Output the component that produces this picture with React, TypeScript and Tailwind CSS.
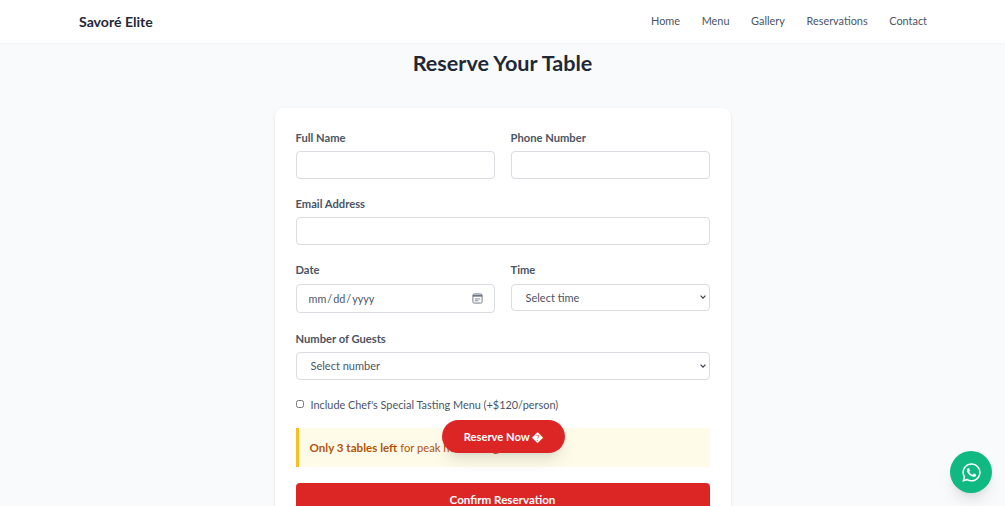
import { FaWhatsapp } from 'react-icons/fa';

const navLinks = ['Home', 'Menu', 'Gallery', 'Reservations', 'Contact'];

const labelClass = 'block mb-[4.4px] text-[11.2px] leading-[18px] font-bold text-[#4b5563]';
const fieldClass =
  'block w-full h-[27.6px] bg-white border border-[#d9dce1] rounded-[4px] text-[#4b5563]';

function Select({ label }: { label: string }) {
  return (
    <div className="relative">
      <select className={`${fieldClass} appearance-none px-[14px] pt-[1px] text-[11px]`}>
        <option>{label}</option>
      </select>
      <svg
        viewBox="0 0 6 4"
        className="absolute right-[3.5px] top-[11.5px] w-[6px] h-[4px] text-[#374151]"
        fill="none"
        stroke="currentColor"
        strokeWidth="1.2"
      >
        <path d="M.6.7 3 3.1 5.4.7" />
      </svg>
    </div>
  );
}

function App() {
  return (
    <div className="relative h-[506px] overflow-hidden bg-[#f9fafb] font-['Lato',sans-serif]">
      {/* Nav */}
      <nav className="h-[44px] bg-white border-b border-[#f3f4f6] flex items-center justify-between pl-[79px] pr-[78px]">
        <span className="text-[14.1px] font-bold text-[#1f2937]">Savoré Elite</span>
        <div className="flex items-center gap-[21.6px]">
          {navLinks.map((link) => (
            <a key={link} className="text-[10.9px] text-[#4b5563]">
              {link}
            </a>
          ))}
        </div>
      </nav>

      {/* Content */}
      <main className="flex flex-col items-center">
        <h2 className="mt-[3px] mb-[28px] text-[21.6px] leading-[33px] font-bold text-[#1f2937]">Reserve Your Table</h2>

        <form className="w-[456px] bg-white rounded-[8px] shadow-sm px-[21px] pt-[20.6px]">
          <div className="grid grid-cols-2 gap-x-[16px]">
            <div>
              <label className={labelClass}>Full Name</label>
              <input type="text" className={`${fieldClass} px-[10px] text-[11px]`} />
            </div>
            <div>
              <label className={labelClass}>Phone Number</label>
              <input type="tel" className={`${fieldClass} px-[10px] text-[11px]`} />
            </div>
          </div>

          <div className="mt-[16.4px]">
            <label className={labelClass}>Email Address</label>
            <input type="email" className={`${fieldClass} px-[10px] text-[11px]`} />
          </div>

          <div className="mt-[16.4px] grid grid-cols-2 gap-x-[16px]">
            <div>
              <label className={labelClass}>Date</label>
              <div className="relative">
                <input
                  type="date"
                  className={`${fieldClass} h-[29.6px] pl-[11px] pr-[10px] pt-[1px] text-[10.8px] [&::-webkit-calendar-picker-indicator]:opacity-0`}
                />
                <svg
                  viewBox="0 0 12 12"
                  className="absolute right-[12px] top-[9px] w-[11px] h-[11px] text-[#6b7280]"
                  fill="none"
                  stroke="currentColor"
                >
                  <rect x="1" y="1" width="10" height="10" rx="1.5" strokeWidth="1" />
                  <path d="M1 3h10" strokeWidth="2" />
                  <path d="M3 6.5h6M3 8.5h4" strokeWidth="0.9" />
                </svg>
              </div>
            </div>
            <div>
              <label className={labelClass}>Time</label>
              <Select label="Select time" />
            </div>
          </div>

          <div className="mt-[16.4px]">
            <label className={labelClass}>Number of Guests</label>
            <Select label="Select number" />
          </div>

          <label className="mt-[16px] flex items-center gap-[7px] text-[10.9px] leading-[18px] text-[#4b5563]">
            <input type="checkbox" className="w-[8px] h-[8px] mb-[2px]" />
            Include Chef's Special Tasting Menu (+$120/person)
          </label>

          <div className="mt-[14.6px] h-[38.4px] flex items-center pl-[11px] bg-[#fefce8] border-l-[3px] border-[#fbbf24] text-[11.2px] text-[#b45309]">
            <p>
              <strong className="text-[11.6px] font-bold">Only 3 tables left</strong> for peak hours tonight
            </p>
          </div>

          <button
            type="button"
            className="mt-[16.6px] w-full h-[33px] bg-[#dc2626] rounded-[4px] text-white text-[11.6px] font-bold"
          >
            Confirm Reservation
          </button>
        </form>
      </main>

      {/* Floating actions */}
      <button
        type="button"
        className="absolute left-[442px] top-[420px] w-[123px] h-[33px] pt-[1px] rounded-full bg-[#dc2626] text-white text-[11.2px] font-bold shadow-lg"
      >
        Reserve Now �
      </button>
      <a className="absolute left-[950px] top-[451px] w-[42px] h-[42px] rounded-full bg-[#10b981] text-white flex items-center justify-center shadow-lg">
        <FaWhatsapp size={21} />
      </a>
    </div>
  );
}

export default App;
